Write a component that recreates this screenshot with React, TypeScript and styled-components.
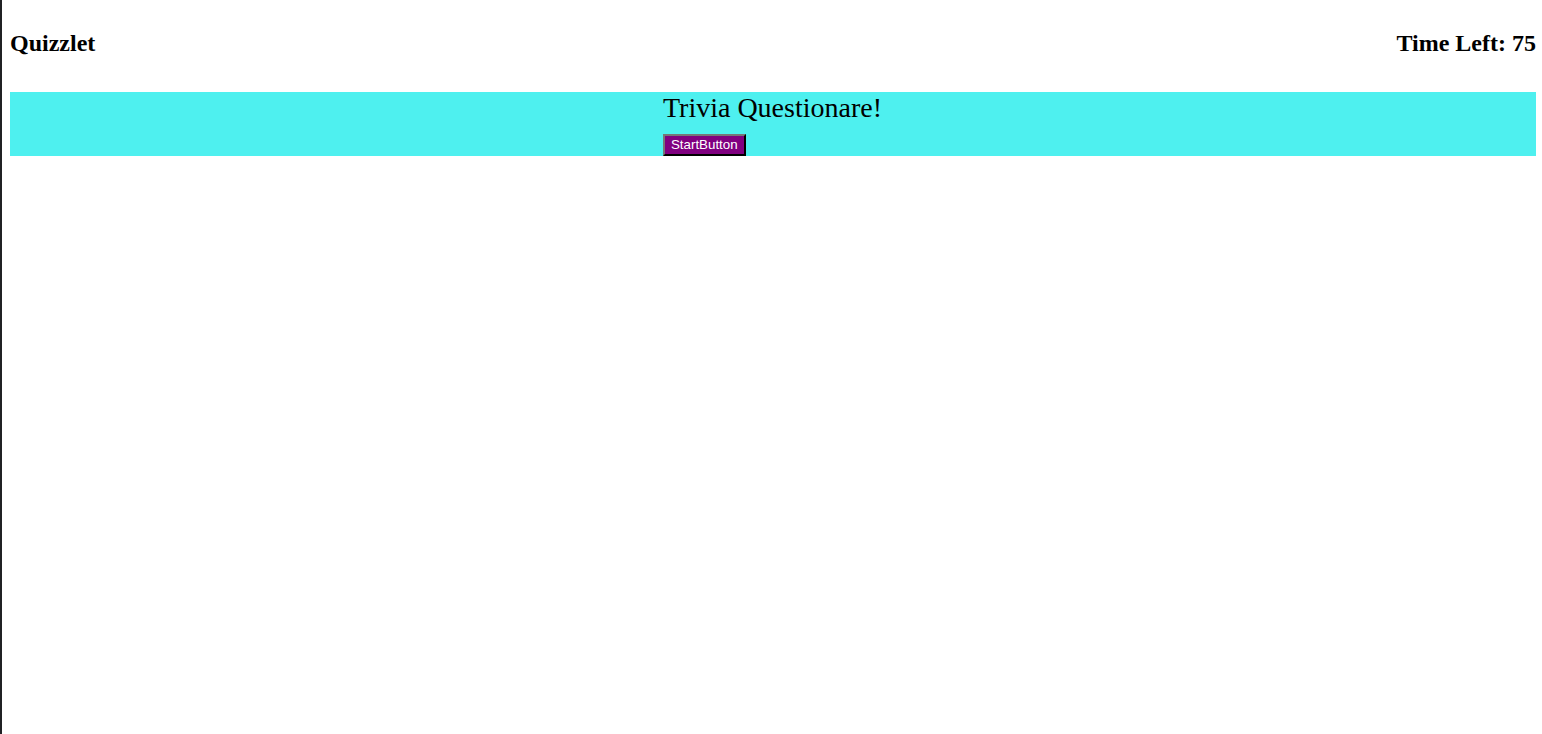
import React from "react";
import styled, { createGlobalStyle } from "styled-components";

const GlobalStyle = createGlobalStyle`
  html {
    box-sizing: border-box;
    min-height: 100%;
    border-left: 2px solid #202124;
    background: #ffffff;
  }
  body {
    margin: 8px 6px 8px 8px;
    font-family: "Liberation Serif", "Times New Roman", serif;
    color: #000;
  }
`;

const Header = styled.header`
  display: flex;
  justify-content: space-between;
  align-items: baseline;
`;

const Heading = styled.h2`
  font-size: 24px;
  font-weight: bold;
  margin: 22px 0 18px;
`;

const Banner = styled.section`
  margin-top: 17px;
  background: #4ef0ef;
  text-align: center;
  height: 64px;
`;

const BannerInner = styled.div`
  display: inline-block;
  text-align: left;
  margin-right: 1px;
`;

const Title = styled.div`
  font-size: 28px;
  line-height: 31px;
`;

const StartButton = styled.button`
  display: block;
  margin-top: 11px;
  font-family: "Liberation Sans", Arial, sans-serif;
  font-size: 13.33px;
  line-height: normal;
  padding: 1px 6px 2px;
  color: #ffffff;
  background: #800080;
  border: 2px outset #767676;
  border-right-color: #333;
  border-bottom-color: #333;
  cursor: pointer;
`;

export default function App() {
  return (
    <>
      <GlobalStyle />
      <Header>
        <Heading>Quizzlet</Heading>
        <Heading>Time Left: 75</Heading>
      </Header>
      <Banner>
        <BannerInner>
          <Title>Trivia Questionare!</Title>
          <StartButton>StartButton</StartButton>
        </BannerInner>
      </Banner>
    </>
  );
}
